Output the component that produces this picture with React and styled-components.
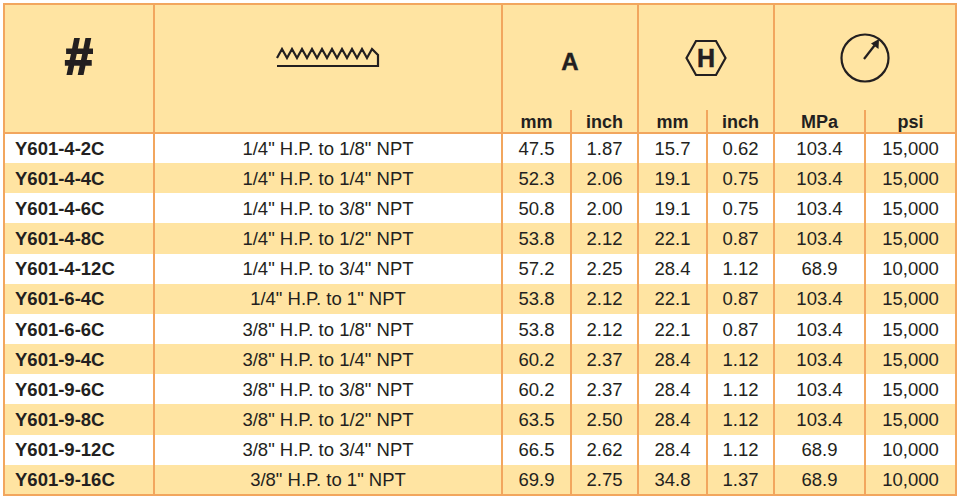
import React from 'react';
import styled, { createGlobalStyle } from 'styled-components';

const GlobalStyle = createGlobalStyle`
  body {
    margin: 0;
    background: #ffffff;
    font-family: "Liberation Sans", Arial, sans-serif;
    color: #231f20;
  }
`;

const ORANGE = '#f2a65e';
const CREAM = '#ffe4a2';

const Page = styled.div`
  padding: 3px 0 0 3px;
`;

const Table = styled.table`
  border-collapse: collapse;
  table-layout: fixed;
  width: 952px;
  border: 2px solid ${ORANGE};
`;

const HeadCell = styled.th`
  background: ${CREAM};
  border-left: 2px solid ${ORANGE};
  border-right: 2px solid ${ORANGE};
  border-top: 2px solid ${ORANGE};
  border-bottom: ${(p) => (p.$group ? 'none' : `2px solid ${ORANGE}`)};
  padding: ${(p) => (p.$group ? `${p.$shift || 0}px 0 0 0` : '0 0 23px 0')};
  vertical-align: middle;
  text-align: center;
  font-weight: bold;
  color: #231f20;
`;

const HeadRow = styled.tr`
  height: 106px;
`;

const UnitRow = styled.tr`
  height: 23px;
`;

const UnitCell = styled.th`
  background: ${CREAM};
  border-top: none;
  border-bottom: 2px solid ${ORANGE};
  border-left: 2px solid ${ORANGE};
  border-right: 2px solid ${ORANGE};
  padding: 0;
  vertical-align: bottom;
  font-size: 18px;
  font-weight: bold;
  line-height: 20px;
  text-align: center;
`;

const Hash = styled.span`
  font-size: 50px;
  line-height: 1;
  -webkit-text-stroke: 2px #231f20;
`;

const Letter = styled.span`
  font-size: 24px;
  line-height: 1;
  -webkit-text-stroke: 0.4px #231f20;
`;

const Row = styled.tr`
  height: 30.17px;
  background: ${(p) => (p.$alt ? CREAM : '#ffffff')};
`;

const Cell = styled.td`
  border-left: 2px solid ${ORANGE};
  border-right: 2px solid ${ORANGE};
  padding: ${(p) => (p.$id ? '1px 0 0 10px' : '1px 0 0 0')};
  text-align: ${(p) => (p.$id ? 'left' : 'center')};
  font-weight: ${(p) => (p.$id ? 'bold' : 'normal')};
  font-size: 18.5px;
  line-height: 28px;
  white-space: nowrap;
  color: #231f20;
`;

const Icon = styled.svg`
  display: block;
  margin: 0 auto;
`;

const ThreadIcon = () => (
  <Icon width="106" height="22" viewBox="0 0 106 22">
    <path
      d="M2 12 L7 3 L12 12 L17 3 L22 12 L27 3 L32 12 L37 3 L42 12 L47 3 L52 12 L57 3 L62 12 L67 3 L72 12 L77 3 L82 12 L87 3 L92 12 L97 3 L103 9 L103 20 L2 20"
      fill="none"
      stroke="#231f20"
      strokeWidth="2.2"
      strokeLinejoin="miter"
    />
  </Icon>
);

const HexIcon = () => (
  <Icon width="42" height="38" viewBox="0 0 42 38">
    <polygon
      points="1.5,19 11,2 31,2 40.5,19 31,36 11,36"
      fill="none"
      stroke="#231f20"
      strokeWidth="2.2"
    />
    <text
      x="21"
      y="28"
      textAnchor="middle"
      fontFamily="Liberation Sans, Arial, sans-serif"
      fontWeight="bold"
      fontSize="25"
      fill="#231f20"
      stroke="#231f20"
      strokeWidth="0.5"
    >
      H
    </text>
  </Icon>
);

const GaugeIcon = () => (
  <Icon width="52" height="52" viewBox="0 0 52 52">
    <circle cx="26" cy="26" r="23.5" fill="none" stroke="#231f20" strokeWidth="2.2" />
    <line x1="25" y1="27" x2="35.5" y2="13.5" stroke="#231f20" strokeWidth="2.2" />
    <polygon points="40,7 39.5,17 32,11.5" fill="#231f20" />
  </Icon>
);

const rows = [
  ['Y601-4-2C', '1/4" H.P. to 1/8" NPT', '47.5', '1.87', '15.7', '0.62', '103.4', '15,000'],
  ['Y601-4-4C', '1/4" H.P. to 1/4" NPT', '52.3', '2.06', '19.1', '0.75', '103.4', '15,000'],
  ['Y601-4-6C', '1/4" H.P. to 3/8" NPT', '50.8', '2.00', '19.1', '0.75', '103.4', '15,000'],
  ['Y601-4-8C', '1/4" H.P. to 1/2" NPT', '53.8', '2.12', '22.1', '0.87', '103.4', '15,000'],
  ['Y601-4-12C', '1/4" H.P. to 3/4" NPT', '57.2', '2.25', '28.4', '1.12', '68.9', '10,000'],
  ['Y601-6-4C', '1/4" H.P. to 1" NPT', '53.8', '2.12', '22.1', '0.87', '103.4', '15,000'],
  ['Y601-6-6C', '3/8" H.P. to 1/8" NPT', '53.8', '2.12', '22.1', '0.87', '103.4', '15,000'],
  ['Y601-9-4C', '3/8" H.P. to 1/4" NPT', '60.2', '2.37', '28.4', '1.12', '103.4', '15,000'],
  ['Y601-9-6C', '3/8" H.P. to 3/8" NPT', '60.2', '2.37', '28.4', '1.12', '103.4', '15,000'],
  ['Y601-9-8C', '3/8" H.P. to 1/2" NPT', '63.5', '2.50', '28.4', '1.12', '103.4', '15,000'],
  ['Y601-9-12C', '3/8" H.P. to 3/4" NPT', '66.5', '2.62', '28.4', '1.12', '68.9', '10,000'],
  ['Y601-9-16C', '3/8" H.P. to 1" NPT', '69.9', '2.75', '34.8', '1.37', '68.9', '10,000'],
];

const widths = [150, 348, 69, 67, 69, 67, 91, 91];
const units = ['mm', 'inch', 'mm', 'inch', 'MPa', 'psi'];

const App = () => (
  <Page>
    <GlobalStyle />
    <Table>
      <colgroup>
        {widths.map((w, i) => (
          <col key={i} style={{ width: w }} />
        ))}
      </colgroup>
      <thead>
        <HeadRow>
          <HeadCell rowSpan={2}>
            <Hash>#</Hash>
          </HeadCell>
          <HeadCell rowSpan={2}>
            <ThreadIcon />
          </HeadCell>
          <HeadCell colSpan={2} $group $shift={8}>
            <Letter>A</Letter>
          </HeadCell>
          <HeadCell colSpan={2} $group>
            <HexIcon />
          </HeadCell>
          <HeadCell colSpan={2} $group>
            <GaugeIcon />
          </HeadCell>
        </HeadRow>
        <UnitRow>
          {units.map((u, i) => (
            <UnitCell key={i}>{u}</UnitCell>
          ))}
        </UnitRow>
      </thead>
      <tbody>
        {rows.map((r, i) => (
          <Row key={r[0]} $alt={i % 2 === 1}>
            {r.map((v, j) => (
              <Cell key={j} $id={j === 0}>
                {v}
              </Cell>
            ))}
          </Row>
        ))}
      </tbody>
    </Table>
  </Page>
);

export default App;
